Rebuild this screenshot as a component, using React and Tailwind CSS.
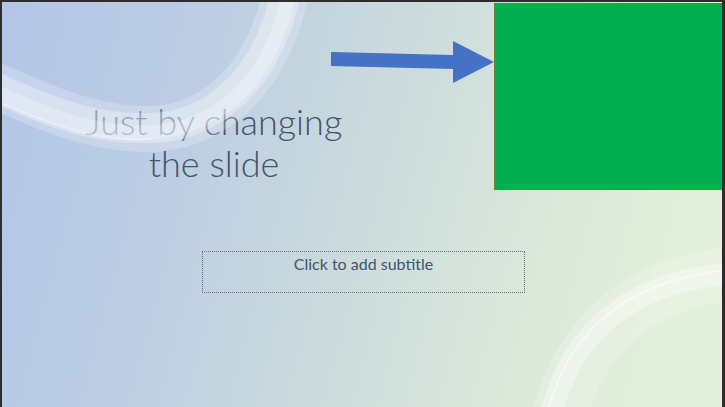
export default function App() {
  return (
    <div className="w-[725px] h-[407px] bg-[#2d2d2d] overflow-hidden">
      <div className="relative ml-[2px] mt-[2px] w-[720px] h-[405px] overflow-hidden bg-[linear-gradient(105deg,#b3c6e7_0%,#bccde4_25%,#cbdbdd_50%,#dae8da_72%,#e2efda_90%)]">
        {/* Title */}
        <div
          className="absolute left-[40px] top-[98px] w-[344px] text-center text-[36px] leading-[42px] text-[#44546a] font-light"
          style={{ fontFamily: '"Lato", "Open Sans", sans-serif' }}
        >
          Just by changing
          <br />
          the slide
        </div>

        {/* swoosh overlays */}
        <svg className="absolute left-0 top-0" width="720" height="405" viewBox="0 0 720 405">
          <path d="M -10 82 C 60 114 100 128 150 127 C 210 125 248 82 266 44 C 276 22 281 8 283 -10" fill="none" stroke="white" strokeOpacity="0.22" strokeWidth="46" />
          <path d="M -10 84 C 60 116 100 128 150 126 C 210 124 248 82 266 44 C 276 22 281 8 283 -10" fill="none" stroke="white" strokeOpacity="0.3" strokeWidth="30" />
          <path d="M -10 88 C 60 120 100 132 150 130 C 212 127 251 85 269 46 C 279 24 284 10 286 -10" fill="none" stroke="white" strokeOpacity="0.25" strokeWidth="14" />
          <path d="M -10 97 C 60 128 100 140 150 137" fill="none" stroke="white" strokeOpacity="0.45" strokeWidth="2" />
          {/* bottom-right swoosh */}
          <path d="M 558 412 Q 592 290 724 272" fill="none" stroke="white" strokeOpacity="0.2" strokeWidth="54" />
          <path d="M 552 412 Q 586 290 724 276" fill="none" stroke="white" strokeOpacity="0.35" strokeWidth="22" transform="translate(-2,-4)" />
          <path d="M 546 412 Q 580 288 724 272" fill="none" stroke="white" strokeOpacity="0.5" strokeWidth="2" transform="translate(0,-4)" />
        </svg>

        {/* Arrow */}
        <svg className="absolute left-0 top-0" width="720" height="405" viewBox="0 0 720 405">
          <polygon points="329,50 451,53 451,39 492,60 451,81 451,67 329,64" fill="#4472c4" />
        </svg>

        {/* Green box */}
        <div className="absolute left-[492px] top-[1px] w-[232px] h-[187px] bg-[#00b050] border border-[#707f3c]" />

        {/* Subtitle placeholder */}
        <div
          className="absolute left-[200px] top-[249px] w-[323px] h-[42px] border border-dotted border-[#6b6b6b] text-center text-[16px] leading-[24px] text-[#44546a]"
          style={{ fontFamily: '"Lato", "Open Sans", sans-serif' }}
        >
          Click to add subtitle
        </div>
      </div>
    </div>
  );
}
